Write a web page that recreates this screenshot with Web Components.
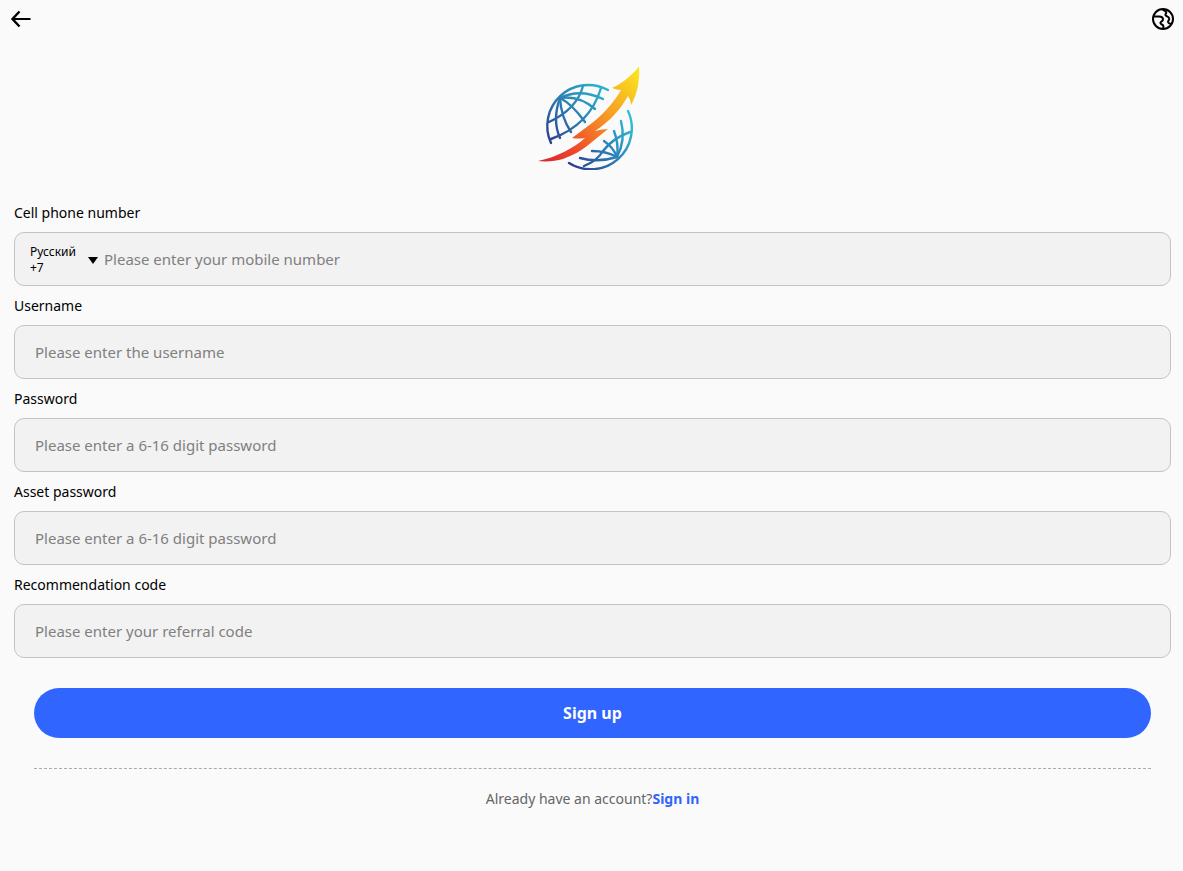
<!DOCTYPE html>
<html lang="en">
<head>
<meta charset="utf-8">
<meta name="viewport" content="width=device-width, initial-scale=1">
<title>Sign up</title>
<style>
  body {
    margin: 0;
    background: #fafafa;
    color: #000;
    font-family: "Segoe UI", "Noto Sans", sans-serif;
    font-size: 14px;
  }
</style>
</head>
<body>
<sign-up-page></sign-up-page>

<template id="nav-bar">
  <style>
    :host {
      display: flex;
      align-items: center;
      justify-content: space-between;
      height: 38px;
      padding: 0 8px;
    }
    button {
      display: flex;
      padding: 0;
      border: 0;
      background: none;
      color: inherit;
      cursor: pointer;
    }
    svg {
      fill: none;
      stroke: currentColor;
      stroke-width: 2;
    }
  </style>
  <button type="button" class="back" aria-label="Back">
    <svg width="24" height="24" viewBox="0 0 24 24">
      <path stroke-width="2.400" d="M11.500 4.500 4.500 12l7 7.500"/>
      <path d="M4.500 12h18"/>
    </svg>
  </button>
  <button type="button" class="language" aria-label="Language">
    <svg width="24" height="24" viewBox="0 0 24 24" stroke-linejoin="round">
      <circle cx="12" cy="12" r="10"/>
      <path d="M2.500 9.500H8c2.600 0 4 1.200 4 3 0 2-2.600 1.800-2.600 3.600 0 1.500 2.800 1.300 3 3 .1 1-.1 1.700-.5 2.600"/>
      <path d="M11.500 2.200c.5 1.400 3.800 1.400 3.800 3.200 0 1.300-1.300 1.500-.8 2.700.6 1.400 3.300 1.400 3.700 3.400.4 1.600-1.400 2.100-1.100 3.700.3 1.200 1.700 1.500 2.900 1.700"/>
    </svg>
  </button>
</template>

<template id="brand-logo">
  <style>
    :host {
      display: flex;
      justify-content: center;
    }
  </style>
  <svg width="109" height="104" viewBox="8 6 109 104" role="img" aria-label="Logo">
    <defs>
      <linearGradient id="north" gradientUnits="userSpaceOnUse" x1="20" y1="83" x2="76" y2="30">
        <stop offset="0" stop-color="#2b3f8e"/>
        <stop offset=".45" stop-color="#2b7bb0"/>
        <stop offset="1" stop-color="#2cb4cc"/>
      </linearGradient>
      <linearGradient id="south" gradientUnits="userSpaceOnUse" x1="42" y1="104" x2="101" y2="58">
        <stop offset="0" stop-color="#2a3f92"/>
        <stop offset=".5" stop-color="#2b7fb8"/>
        <stop offset="1" stop-color="#2fc0d2"/>
      </linearGradient>
      <linearGradient id="arrow" gradientUnits="userSpaceOnUse" x1="10" y1="101" x2="108" y2="10">
        <stop offset="0" stop-color="#d92331"/>
        <stop offset=".25" stop-color="#ee4a2b"/>
        <stop offset=".6" stop-color="#f69a26"/>
        <stop offset="1" stop-color="#fbe51e"/>
      </linearGradient>
    </defs>
    <g fill="none" stroke="url(#north)" stroke-width="2.400" stroke-linecap="round">
      <path d="M78 30A41 41 0 0 0 21 83"/>
      <path d="M30 38Q50 28 73 39"/>
      <path d="M30 38Q49 35 65 49"/>
      <path d="M30 38Q42 44 55 62"/>
      <path d="M30 38Q31 57 41 72"/>
      <path d="M30 38Q22 60 30 78"/>
      <path d="M53 26Q47 49 19 62"/>
      <path d="M71 28Q60 65 21 79"/>
    </g>
    <g fill="none" stroke="url(#south)" stroke-width="2.400" stroke-linecap="round">
      <path d="M98 51A41 41 0 0 1 39 103"/>
      <path d="M91 61Q96 80 87 97"/>
      <path d="M84 71Q89 84 87 97"/>
      <path d="M74 81Q83 87 87 97"/>
      <path d="M62 91Q76 91 87 97"/>
      <path d="M50 98Q68 103 87 97"/>
      <path d="M100 72Q83 78 73 91Q67 101 54 106"/>
    </g>
    <path fill="url(#arrow)" d="M109 6.500C102 15 93 23 82 28q5 2 9 2C84 42 72 57 54 69L42 78q7 1 13 0C44 88 27 97 8 101c9 1 18 0 25-2 10-4 18-8 24-13L78 69q-6 0-13 2C79 62 91 49 98 36q3 4 3 9c6-10 9-24 8-38.500Z"/>
  </svg>
</template>

<template id="form-field">
  <style>
    :host {
      display: block;
    }
    label {
      display: block;
      padding: 10px 0 9px;
      line-height: 20px;
    }
    .box {
      display: flex;
      align-items: center;
      height: 52px;
      border: 1px solid #c4c4c4;
      border-radius: 10px;
      background: #f2f2f2;
    }
    .box:focus-within {
      border-color: #3165ff;
    }
    input {
      flex: 1;
      min-width: 0;
      height: 100%;
      box-sizing: border-box;
      padding: 0 20px;
      border: 0;
      outline: 0;
      background: none;
      color: inherit;
      font: inherit;
      font-size: 15px;
    }
    :host([prefixed]) input {
      padding-left: 6px;
    }
    input::placeholder {
      color: #808080;
      opacity: 1;
    }
  </style>
  <label for="input"></label>
  <div class="box">
    <slot></slot>
    <input id="input">
  </div>
</template>

<template id="country-picker">
  <style>
    :host {
      display: block;
    }
    button {
      display: flex;
      align-items: center;
      gap: 12px;
      padding: 2px 0 0 15px;
      border: 0;
      background: none;
      color: inherit;
      font: inherit;
      font-size: 12px;
      line-height: 16px;
      text-align: left;
      cursor: pointer;
    }
    .name,
    .code {
      display: block;
    }
    .caret {
      border: 5px solid transparent;
      border-top: 7px solid #000;
      border-bottom: 0;
    }
  </style>
  <button type="button" aria-haspopup="dialog">
    <span>
      <span class="name"></span>
      <span class="code"></span>
    </span>
    <span class="caret"></span>
  </button>
</template>

<template id="sign-up-page">
  <style>
    :host {
      display: block;
    }
    brand-logo {
      padding-top: 28px;
    }
    main {
      padding: 0 12px 24px 14px;
    }
    form {
      padding-top: 23px;
    }
    .actions {
      padding: 30px 20px 0;
      text-align: center;
    }
    .submit {
      display: block;
      width: 100%;
      height: 50px;
      border: 0;
      border-radius: 25px;
      background: #3165ff;
      color: #fff;
      font: inherit;
      font-size: 16px;
      font-weight: 700;
      cursor: pointer;
    }
    p {
      margin: 30px 0 0;
      padding-top: 20px;
      border-top: 1px dashed #aaa;
      color: #666;
      line-height: 20px;
    }
    a {
      color: #3165ff;
      font-weight: 700;
      text-decoration: none;
    }
  </style>
  <nav-bar></nav-bar>
  <main>
    <brand-logo></brand-logo>
    <form>
      <form-field label="Cell phone number" type="tel" placeholder="Please enter your mobile number" prefixed>
        <country-picker name="Русский" code="+7"></country-picker>
      </form-field>
      <form-field label="Username" placeholder="Please enter the username"></form-field>
      <form-field label="Password" type="password" placeholder="Please enter a 6-16 digit password"></form-field>
      <form-field label="Asset password" type="password" placeholder="Please enter a 6-16 digit password"></form-field>
      <form-field label="Recommendation code" placeholder="Please enter your referral code"></form-field>
      <div class="actions">
        <button class="submit">Sign up</button>
        <p>Already have an account?<a href="#login">Sign in</a></p>
      </div>
    </form>
  </main>
</template>

<script>
class BaseElement extends HTMLElement {
  constructor() {
    super();
    const template = document.getElementById(this.localName);
    this.attachShadow({ mode: "open" });
    this.shadowRoot.appendChild(template.content.cloneNode(true));
  }
}

class NavBar extends BaseElement {
  connectedCallback() {
    this.shadowRoot.querySelector(".back").addEventListener("click", () => {
      history.back();
    });
  }
}

class BrandLogo extends BaseElement {}

class FormField extends BaseElement {
  connectedCallback() {
    this.input = this.shadowRoot.querySelector("input");
    this.input.type = this.getAttribute("type") || "text";
    this.input.placeholder = this.getAttribute("placeholder") || "";
    this.shadowRoot.querySelector("label").textContent = this.getAttribute("label");
  }

  get value() {
    return this.input.value;
  }
}

class CountryPicker extends BaseElement {
  static get observedAttributes() {
    return ["name", "code"];
  }

  attributeChangedCallback(name, oldValue, newValue) {
    this.shadowRoot.querySelector("." + name).textContent = newValue;
  }
}

class SignUpPage extends BaseElement {
  connectedCallback() {
    this.shadowRoot.querySelector("form").addEventListener("submit", (e) => {
      e.preventDefault();
      const fields = this.shadowRoot.querySelectorAll("form-field");
      const detail = Array.from(fields, (field) => field.value);
      this.dispatchEvent(new CustomEvent("sign-up", { bubbles: true, detail: detail }));
    });
  }
}

customElements.define("nav-bar", NavBar);
customElements.define("brand-logo", BrandLogo);
customElements.define("form-field", FormField);
customElements.define("country-picker", CountryPicker);
customElements.define("sign-up-page", SignUpPage);
</script>
</body>
</html>
